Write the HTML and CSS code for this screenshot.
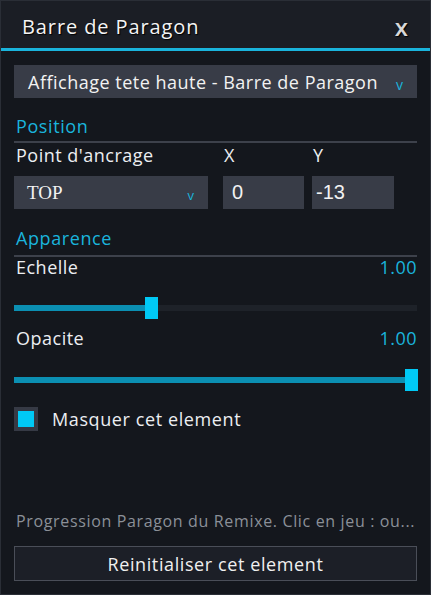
FILE: index.html
```html
<!DOCTYPE html>
<html lang="fr">
<head>
<meta charset="utf-8">
<title>Barre de Paragon</title>
<link rel="stylesheet" href="styles.css">
</head>
<body>
<div class="window">
  <header class="titlebar">
    <h1 class="title">Barre de Paragon</h1>
    <span class="close">x</span>
  </header>
  <div class="content">
    <div class="select select-wide">
      <span>Affichage tete haute - Barre de Paragon</span>
      <span class="caret">v</span>
    </div>

    <h2 class="section">Position</h2>
    <div class="pos-grid">
      <span class="label label-anchor">Point d'ancrage</span>
      <span class="label label-x">X</span>
      <span class="label label-y">Y</span>
      <div class="select select-anchor">
        <span class="anchor-text">TOP</span>
        <span class="caret caret-small">v</span>
      </div>
      <div class="input input-x">0</div>
      <div class="input input-y">-13</div>
    </div>

    <h2 class="section section-2">Apparence</h2>
    <div class="row-label">
      <span class="label">Echelle</span>
      <span class="value">1.00</span>
    </div>
    <div class="slider">
      <div class="fill" style="width: 34%"></div>
      <div class="thumb" style="left: 32.6%"></div>
    </div>
    <div class="row-label row-opacity">
      <span class="label">Opacite</span>
      <span class="value">1.00</span>
    </div>
    <div class="slider slider-2">
      <div class="fill" style="width: 100%"></div>
      <div class="thumb thumb-end"></div>
    </div>

    <label class="check">
      <span class="box"><span class="mark"></span></span>
      <span class="check-text">Masquer cet element</span>
    </label>

    <div class="spacer"></div>
    <p class="desc">Progression Paragon du Remixe. Clic en jeu : ou...</p>
    <div class="button">Reinitialiser cet element</div>
  </div>
</div>
</body>
</html>
```
FILE: styles.css
```css
html, body {
  margin: 0;
  padding: 0;
}
body {
  width: 431px;
  height: 595px;
  background: #13161c;
  font-family: "Open Sans", "Noto Sans", sans-serif;
  color: #eceef2;
  overflow: hidden;
}
.window {
  box-sizing: border-box;
  width: 431px;
  height: 595px;
  border: 1px solid #2a2e36;
  background: #14171d;
  display: flex;
  flex-direction: column;
}
.titlebar {
  box-sizing: border-box;
  height: 50px;
  background: #1b1e25;
  border-bottom: 3px solid #1ab4dc;
  display: flex;
  align-items: flex-start;
  justify-content: space-between;
  padding: 12px 22px 0 21px;
}
.title {
  margin: 0;
  font-size: 20px;
  line-height: 27px;
  font-weight: 400;
  color: #f4f4f4;
  letter-spacing: 0.9px;
  text-shadow: 1px 1px 1px #000;
}
.close {
  font-size: 24px;
  line-height: 27px;
  color: #d8d8d8;
  font-weight: 600;
  text-shadow: 1px 1px 1px #000;
}
.content {
  flex: 1;
  display: flex;
  flex-direction: column;
  padding: 14px 13px 13px 13px;
}
.select {
  background: #383c47;
  display: flex;
  align-items: center;
  justify-content: space-between;
  box-sizing: border-box;
}
.select-wide {
  height: 33px;
  padding: 0 14px 0 14px;
  font-size: 18px;
  letter-spacing: 0.5px;
  color: #f2f2f2;
}
.caret {
  color: #1ab4dc;
  font-size: 14px;
  letter-spacing: 0;
  margin-top: 5px;
}
.caret-small {
  font-size: 13px;
  margin-top: 4px;
}
.section {
  margin: 17px 0 0 0;
  padding: 0 2px 4px;
  font-size: 18px;
  letter-spacing: 0.6px;
  font-weight: 400;
  color: #1ab4dc;
  border-bottom: 2px solid #3d414b;
  line-height: 22px;
}
.section-2 {
  margin-top: 18px;
  padding-bottom: 6px;
}
.label {
  font-size: 18px;
  letter-spacing: 0.5px;
  color: #eceef2;
  line-height: 24px;
}
.pos-grid {
  display: grid;
  grid-template-columns: 209px 89px 82px;
  row-gap: 9px;
}
.label-anchor { padding-left: 2px; }
.label-x { padding-left: 1px; }
.label-y { padding-left: 1px; }
.select-anchor {
  width: 194px;
  height: 33px;
  padding: 0 14px 0 13px;
}
.anchor-text {
  font-family: "Liberation Serif", serif;
  font-size: 19px;
  color: #f2f2f2;
}
.input {
  height: 33px;
  background: #383c47;
  font-family: "Liberation Sans", sans-serif;
  font-size: 20px;
  color: #f2f2f2;
  display: flex;
  align-items: center;
  box-sizing: border-box;
}
.input-x { width: 81px; padding-left: 9px; }
.input-y { width: 82px; padding-left: 4px; }
.row-label {
  display: flex;
  justify-content: space-between;
  align-items: center;
  padding: 0 0 0 2px;
}
.row-label .label,
.row-label .value {
  line-height: 20px;
}
.row-opacity {
  margin-top: 17px;
}
.value {
  color: #1ab4dc;
  font-size: 18px;
  letter-spacing: 0.5px;
}
.slider {
  position: relative;
  height: 6px;
  background: #1e2229;
  margin-top: 28px;
}
.slider-2 {
  margin-top: 29px;
}
.fill {
  height: 100%;
  background: #0b8fb2;
}
.thumb {
  position: absolute;
  top: -8px;
  width: 13px;
  height: 22px;
  background: #00c9f5;
}
.thumb-end {
  right: -1px;
}
.check {
  display: flex;
  align-items: center;
  margin-top: 24px;
  gap: 14px;
}
.box {
  width: 24px;
  height: 24px;
  background: #363a45;
  display: flex;
  align-items: center;
  justify-content: center;
}
.mark {
  width: 16px;
  height: 16px;
  background: #00c9f5;
}
.check-text {
  font-size: 18px;
  letter-spacing: 0.6px;
  color: #eceef2;
}
.spacer {
  flex: 1;
}
.desc {
  margin: 0 0 15px 2px;
  font-size: 16px;
  line-height: 20px;
  letter-spacing: 0.65px;
  color: #8b9098;
  white-space: nowrap;
}
.button {
  height: 35px;
  box-sizing: border-box;
  border: 1px solid #4a4e58;
  background: #1c1f27;
  display: flex;
  align-items: center;
  justify-content: center;
  font-size: 18px;
  letter-spacing: 0.6px;
  color: #f0f0f0;
}
```
